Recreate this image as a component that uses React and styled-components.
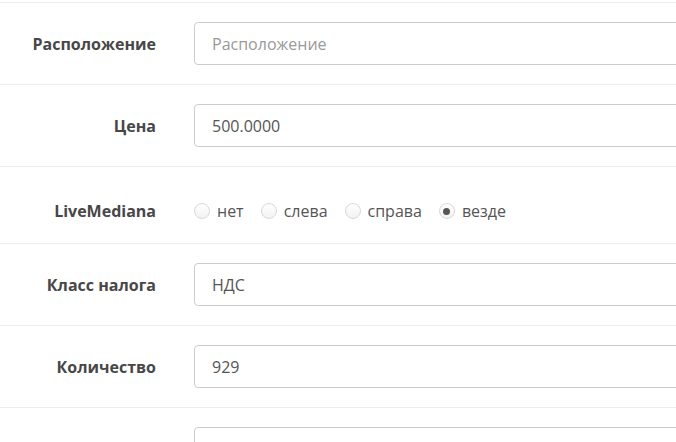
import styled, { createGlobalStyle } from 'styled-components';

const GlobalStyle = createGlobalStyle`
  html, body {
    margin: 0;
    padding: 0;
    background: #fff;
    overflow: hidden;
  }
  body {
    font-family: 'Open Sans', 'Liberation Sans', sans-serif;
    font-size: 16px;
    color: #555;
  }
`;

const Form = styled.div`
  padding-top: 2px;
  width: 676px;
`;

const Row = styled.div`
  display: flex;
  align-items: ${({ top }) => (top ? 'flex-start' : 'center')};
  border-top: 1px solid #ededed;
  padding: 19px 0;
  min-height: ${({ tall }) => (tall ? '38px' : '43px')};
`;

const Label = styled.label`
  flex: 0 0 175px;
  box-sizing: border-box;
  padding-right: 19px;
  padding-top: ${({ top }) => (top ? '14px' : '0')};
  text-align: right;
  font-weight: 700;
  font-size: 16px;
  line-height: 22px;
  color: #474747;
`;

const Field = styled.div`
  flex: 1 0 auto;
  padding-left: 19px;
  display: flex;
`;

const Input = styled.input`
  box-sizing: border-box;
  width: 620px;
  height: 43px;
  padding: 0 17px;
  border: 1px solid #ccc;
  border-radius: 4px;
  font-family: 'Open Sans', 'Liberation Sans', sans-serif;
  font-size: 16px;
  color: #555;
  background: #fff;
  outline: none;

  &::placeholder {
    color: #999;
  }
`;

const Radios = styled.div`
  display: flex;
  align-items: center;
  padding-top: 14px;
  height: 22px;
`;

const RadioItem = styled.label`
  display: flex;
  align-items: center;
  margin-right: 17px;
  font-size: 16px;
  line-height: 22px;
  color: #555;
`;

const Circle = styled.span`
  position: relative;
  box-sizing: border-box;
  flex: 0 0 16px;
  width: 16px;
  height: 16px;
  margin-right: 7px;
  border-radius: 50%;
  border: 1px solid #d9d9d9;
  background: linear-gradient(#fff, #f2f2f2);

  &::after {
    content: '';
    display: ${({ checked }) => (checked ? 'block' : 'none')};
    position: absolute;
    left: 3.5px;
    top: 3.5px;
    width: 7px;
    height: 7px;
    border-radius: 50%;
    background: #555;
  }
`;

const options = ['нет', 'слева', 'справа', 'везде'];

export default function App() {
  return (
    <Form>
      <GlobalStyle />
      <Row>
        <Label>Расположение</Label>
        <Field>
          <Input placeholder='Расположение' />
        </Field>
      </Row>
      <Row>
        <Label>Цена</Label>
        <Field>
          <Input defaultValue='500.0000' />
        </Field>
      </Row>
      <Row top tall>
        <Label top>LiveMediana</Label>
        <Field>
          <Radios>
            {options.map((o) => (
              <RadioItem key={o}>
                <Circle checked={o === 'везде'} />
                {o}
              </RadioItem>
            ))}
          </Radios>
        </Field>
      </Row>
      <Row>
        <Label>Класс налога</Label>
        <Field>
          <Input defaultValue='НДС' />
        </Field>
      </Row>
      <Row>
        <Label>Количество</Label>
        <Field>
          <Input defaultValue='929' />
        </Field>
      </Row>
      <Row>
        <Label></Label>
        <Field>
          <Input />
        </Field>
      </Row>
    </Form>
  );
}
